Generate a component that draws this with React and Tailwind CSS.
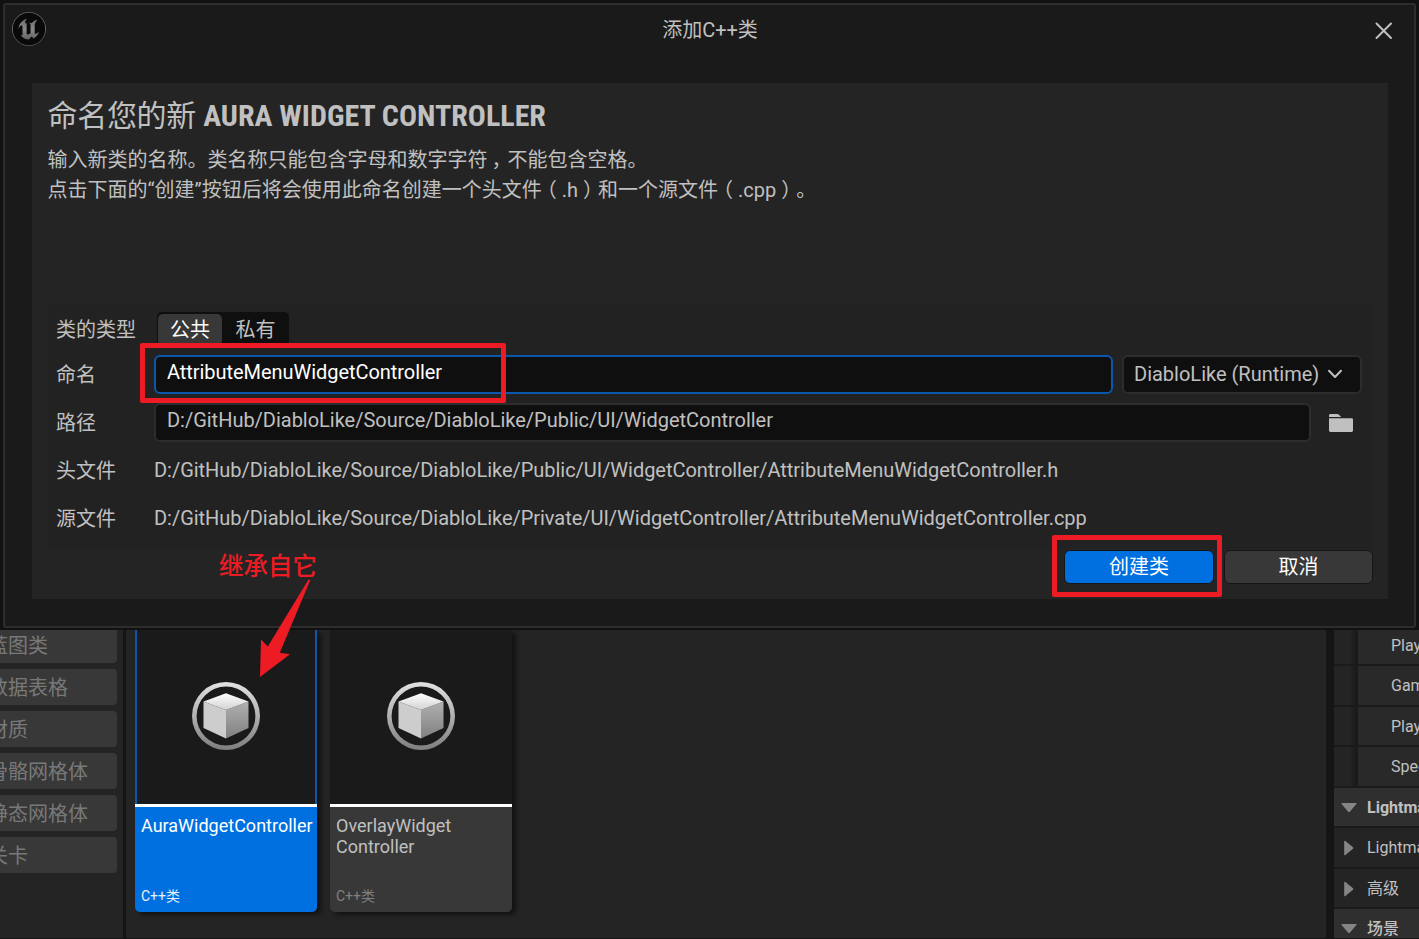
import React from "react";
import { SiUnrealengine } from "react-icons/si";

const assetTypes = ["蓝图类", "数据表格", "材质", "骨骼网格体", "静态网格体", "关卡"];

function Wide({ children, side }) {
  const shift = side === "open" ? "-left-[5px]" : side === "close" ? "left-[5px]" : "left-[4px]";
  return <span className={`relative ${shift}`}>{children}</span>;
}

function CubeIcon() {
  return (
    <svg width="68" height="68" viewBox="0 0 68 68">
      <defs>
        <linearGradient id="ring" x1="0" y1="0" x2="0" y2="1">
          <stop offset="0" stopColor="#e2e2e2" />
          <stop offset="1" stopColor="#7e7e7e" />
        </linearGradient>
        <linearGradient id="cubeTop" x1="0" y1="0" x2="0" y2="1">
          <stop offset="0" stopColor="#ffffff" />
          <stop offset="1" stopColor="#d2d2d2" />
        </linearGradient>
        <linearGradient id="cubeSide" x1="0" y1="0" x2="0" y2="1">
          <stop offset="0" stopColor="#b0b0b0" />
          <stop offset="1" stopColor="#808080" />
        </linearGradient>
      </defs>
      <path
        fill="url(#ring)"
        fillRule="evenodd"
        d="M34 0a34 34 0 1 0 0 68a34 34 0 1 0 0-68zM34 4.6a29.4 29.4 0 1 1 0 58.8a29.4 29.4 0 1 1 0-58.8z"
      />
      <path d="M11.5 19.5L34 28V56.5L11.5 46z" fill="#cdcdcd" />
      <path d="M56.5 19.5L34 28V56.5L56.5 46z" fill="url(#cubeSide)" />
      <path d="M34 11.3L56.5 19.5L34 28L11.5 19.5z" fill="url(#cubeTop)" />
    </svg>
  );
}

function FieldRow({ label, height, children }) {
  return (
    <div className={`flex items-center ${height}`}>
      <div className="w-[98px] shrink-0 pt-[2px]">{label}</div>
      {children}
    </div>
  );
}

function Dialog() {
  return (
    <div className="flex h-[630px] w-full shrink-0 bg-[#111111] pt-[3px] pr-[3px] pb-[2px] pl-[3px] text-[20px] leading-[30px]">
      <div className="flex w-full flex-col rounded-[3px] border-2 border-[#2d2d2d] bg-[#1a1a1a]">
        <div className="flex h-[78px] shrink-0 items-start pt-[7px]">
          <div className="ml-[7px] flex h-[34px] w-[34px] items-center justify-center rounded-full bg-[#090909]">
            <svg width="0" height="0" className="absolute">
              <defs>
                <linearGradient id="steel" x1="0" y1="0" x2="0" y2="1">
                  <stop offset="0.15" stopColor="#666666" />
                  <stop offset="0.5" stopColor="#8a8a8a" />
                  <stop offset="0.85" stopColor="#5c5c5c" />
                </linearGradient>
              </defs>
            </svg>
            <SiUnrealengine size={34} fill="url(#steel)" />
          </div>
          <div className="mt-[3px] flex-1 pr-[3px] pl-[3px] text-center">添加C++类</div>
          <svg className="mt-[9px] mr-[20px]" width="20" height="20" viewBox="0 0 20 20">
            <path d="M2.5 2.5L17 17M17 2.5L2.5 17" stroke="#c0c0c0" strokeWidth="2" strokeLinecap="round" />
          </svg>
        </div>

        <div className="mr-[26px] ml-[27px] flex h-[516px] shrink-0 flex-col bg-[#242424] px-4 pt-[13px]">
          <h1 className="-ml-[0.5px] text-[30px] leading-[40px]">
            <span className="tracking-[-0.3px]">命名您的新 </span>
            <span className="font-bold [font-stretch:75%]">AURA WIDGET CONTROLLER</span>
          </h1>
          <p className="mt-[9px] -ml-[0.5px] [text-spacing-trim:space-all]">
            输入新类的名称。类名称只能包含字母和数字字符<Wide>，</Wide>不能包含空格。
          </p>
          <p className="-ml-[0.5px] [text-spacing-trim:space-all]">
            点击下面的“创建”按钮后将会使用此命名创建一个头文件<Wide side="open">（</Wide>.h<Wide side="close">）</Wide>
            和一个源文件<Wide side="open">（</Wide>.cpp<Wide side="close">）</Wide>。
          </p>

          <div className="mt-[98px] h-[246px] bg-[#222222] px-2 pt-[9px]">
            <FieldRow label="类的类型" height="h-[34px] mb-[4px]">
              <div className="ml-[3px] flex h-[34px] w-[132px] rounded-[5px] bg-[#0f0f0f] pt-[2px] pl-[1px]">
                <div className="flex h-[32px] w-[64px] items-center justify-center rounded-[5px] bg-[#383838] text-white">公共</div>
                <div className="flex h-[32px] w-[67px] items-center justify-center">私有</div>
              </div>
            </FieldRow>
            <FieldRow label="命名" height="h-[48px]">
              <div className="flex h-[39px] w-[959px] items-center rounded-[6px] border-2 border-[#0b57ac] bg-[#0f0f0f] pb-[4px] pl-[11px] tracking-[-0.05px] text-white">
                AttributeMenuWidgetController
              </div>
              <div className="ml-[9px] flex h-[39px] w-[240px] items-center rounded-[6px] border-2 border-[#2d2d2d] bg-[#0f0f0f] pl-[10px]">
                DiabloLike (Runtime)
                <svg className="ml-[8px]" width="16" height="16" viewBox="0 0 16 16" fill="none">
                  <path d="M2 4.8L8 11L14 4.8" stroke="#c0c0c0" strokeWidth="2" strokeLinecap="round" strokeLinejoin="round" />
                </svg>
              </div>
            </FieldRow>
            <FieldRow label="路径" height="h-[48px]">
              <div className="flex h-[39px] w-[1157px] items-center rounded-[6px] border-2 border-[#2d2d2d] bg-[#0f0f0f] pb-[4px] pl-[11px] tracking-[-0.02px]">
                D:/GitHub/DiabloLike/Source/DiabloLike/Public/UI/WidgetController
              </div>
              <svg className="mt-[2px] ml-[18px]" width="24" height="18" viewBox="0 0 24 18" fill="#c0c0c0">
                <path d="M0 3V1.2Q0 0 1.2 0H8.3Q9.2 0 10 .8L12.2 3z" />
                <path d="M0 4.2H22.8Q24 4.2 24 5.4V16.6Q24 18 22.6 18H1.4Q0 18 0 16.6z" />
              </svg>
            </FieldRow>
            <FieldRow label="头文件" height="h-[48px]">
              <span className="tracking-[-0.03px]">
                D:/GitHub/DiabloLike/Source/DiabloLike/Public/UI/WidgetController/AttributeMenuWidgetController.h
              </span>
            </FieldRow>
            <FieldRow label="源文件" height="h-[48px]">
              <span className="tracking-[-0.03px]">
                D:/GitHub/DiabloLike/Source/DiabloLike/Private/UI/WidgetController/AttributeMenuWidgetController.cpp
              </span>
            </FieldRow>
          </div>

          <div className="mt-px -mr-px flex justify-end gap-[10px] text-white">
            <button className="h-[34px] w-[150px] rounded-[6px] border border-[#151515] bg-[#0070e0] pb-[1px]">创建类</button>
            <button className="h-[34px] w-[149px] rounded-[6px] border border-[#151515] bg-[#383838] pb-[1px]">取消</button>
          </div>
        </div>
      </div>
    </div>
  );
}

function AssetTile({ name, selected }) {
  return (
    <div className="flex h-[282px] w-[182px] flex-col rounded-b-[5px] shadow-[4px_3px_5px_rgba(0,0,0,0.5)]">
      <div
        className={`flex h-[174px] items-center justify-center bg-[#1a1a1a] pb-[2px] ${
          selected ? "border-x-2 border-[#0b57ac]" : ""
        }`}
      >
        <CubeIcon />
      </div>
      <div className="h-[3px] bg-white" />
      <div
        className={`flex flex-1 flex-col justify-between rounded-b-[5px] px-[6px] pt-[8px] pb-[6px] ${
          selected ? "bg-[#0070e0] text-white" : "bg-[#383838] text-[#c0c0c0]"
        }`}
      >
        <div className="text-[18px] leading-[21px] whitespace-pre">{name}</div>
        <div className={`text-[14px] leading-5 ${selected ? "text-[#e6f0fb]" : "text-[#808080]"}`}>C++类</div>
      </div>
    </div>
  );
}

function PropertyRow({ label, height }) {
  return (
    <div className={`flex shrink-0 border-b-2 border-[#1a1a1a] ${height}`}>
      <div className="w-[24px] shrink-0 bg-linear-to-r from-[#242424] from-65% to-[#181818]" />
      <div className="flex flex-1 items-center bg-[#292929] pl-[33px]">{label}</div>
    </div>
  );
}

function Triangle({ open }) {
  return (
    <svg className="w-[30px] shrink-0" width="30" height="16" viewBox="0 0 30 16" fill="#858585">
      {open ? (
        <path d="M8 3H22.2Q23 3.2 22.4 4L15.8 11.8Q15 12.6 14.2 11.8L7.6 4Q7 3.2 8 3z" />
      ) : (
        <path d="M10.2 1.2V14.8Q10.4 15.8 11.4 15L19 8.8Q19.8 8 19 7.2L11.4 1Q10.4.2 10.2 1.2z" />
      )}
    </svg>
  );
}

function CategoryRow({ label, open, height }) {
  return (
    <div
      className={`flex shrink-0 items-center border-b-2 border-[#1a1a1a] ${height} ${
        open ? "bg-[#2f2f2f] font-bold" : "bg-[#242424]"
      }`}
    >
      <Triangle open={open} />
      <span className="pl-[3px]">{label}</span>
    </div>
  );
}

export default function App() {
  return (
    <div className="relative flex h-[939px] w-[1419px] flex-col overflow-hidden bg-[#151515] font-['Roboto','Noto_Sans_CJK_SC',sans-serif] whitespace-nowrap text-[#c0c0c0]">
      <Dialog />

      <div className="flex h-[309px] shrink-0 border-b border-[#151515]">
        <div className="flex w-[123px] shrink-0 flex-col gap-[6px] overflow-hidden bg-[#242424]">
          {assetTypes.map((label, i) => (
            <div
              key={label}
              className={`-ml-[20px] flex w-[137px] shrink-0 items-center bg-[#383838] pl-[8px] text-[20px] leading-[30px] text-[#787878] ${
                i === 0 ? "h-[33px] rounded-b-[4px] pb-[1px]" : "h-[36px] rounded-[4px] pt-[2px]"
              }`}
            >
              {label}
            </div>
          ))}
        </div>

        <div className="ml-[3px] flex w-[1200px] shrink-0 gap-[13px] overflow-hidden bg-[#242424] pl-[9px]">
          <AssetTile name="AuraWidgetController" selected />
          <AssetTile name={"OverlayWidget\nController"} />
        </div>

        <div className="ml-[8px] flex w-[85px] shrink-0 flex-col overflow-hidden text-[16px]">
          <PropertyRow label={<span className="-mt-[2px]">PlayerController</span>} height="h-[36px]" />
          <PropertyRow label="GameState" height="h-[41px]" />
          <PropertyRow label={<span className="mt-[2px]">PlayerState</span>} height="h-[40px]" />
          <PropertyRow label="Spectator" height="h-[41px]" />
          <CategoryRow label="Lightmass" open height="h-[40px] pt-[2px]" />
          <CategoryRow label="Lightmass" height="h-[41px]" />
          <CategoryRow label="高级" height="h-[40px] pt-[2px]" />
          <CategoryRow label={<span className="font-medium">场景</span>} open height="h-[41px]" />
        </div>
      </div>

      <div className="absolute top-[343px] left-[140px] h-[59.5px] w-[365.5px] rounded-[2px] border-[5px] border-[#ed1c24]" />
      <div className="absolute top-[535px] left-[1052px] h-[61.5px] w-[169.5px] rounded-[2px] border-[5px] border-[#ed1c24]" />
      <div className="absolute top-[549px] left-[219px] text-[24.5px] leading-[36px] font-medium text-[#ed1c24]">继承自它</div>
      <svg className="absolute top-[575px] left-[250px]" width="70" height="110" viewBox="250 575 70 110">
        <path d="M308.5 579.5L310.3 580L279.8 652.7L290 654.3L260 677L261 639.5L267.8 646.5z" fill="#ed1c24" />
      </svg>
    </div>
  );
}
